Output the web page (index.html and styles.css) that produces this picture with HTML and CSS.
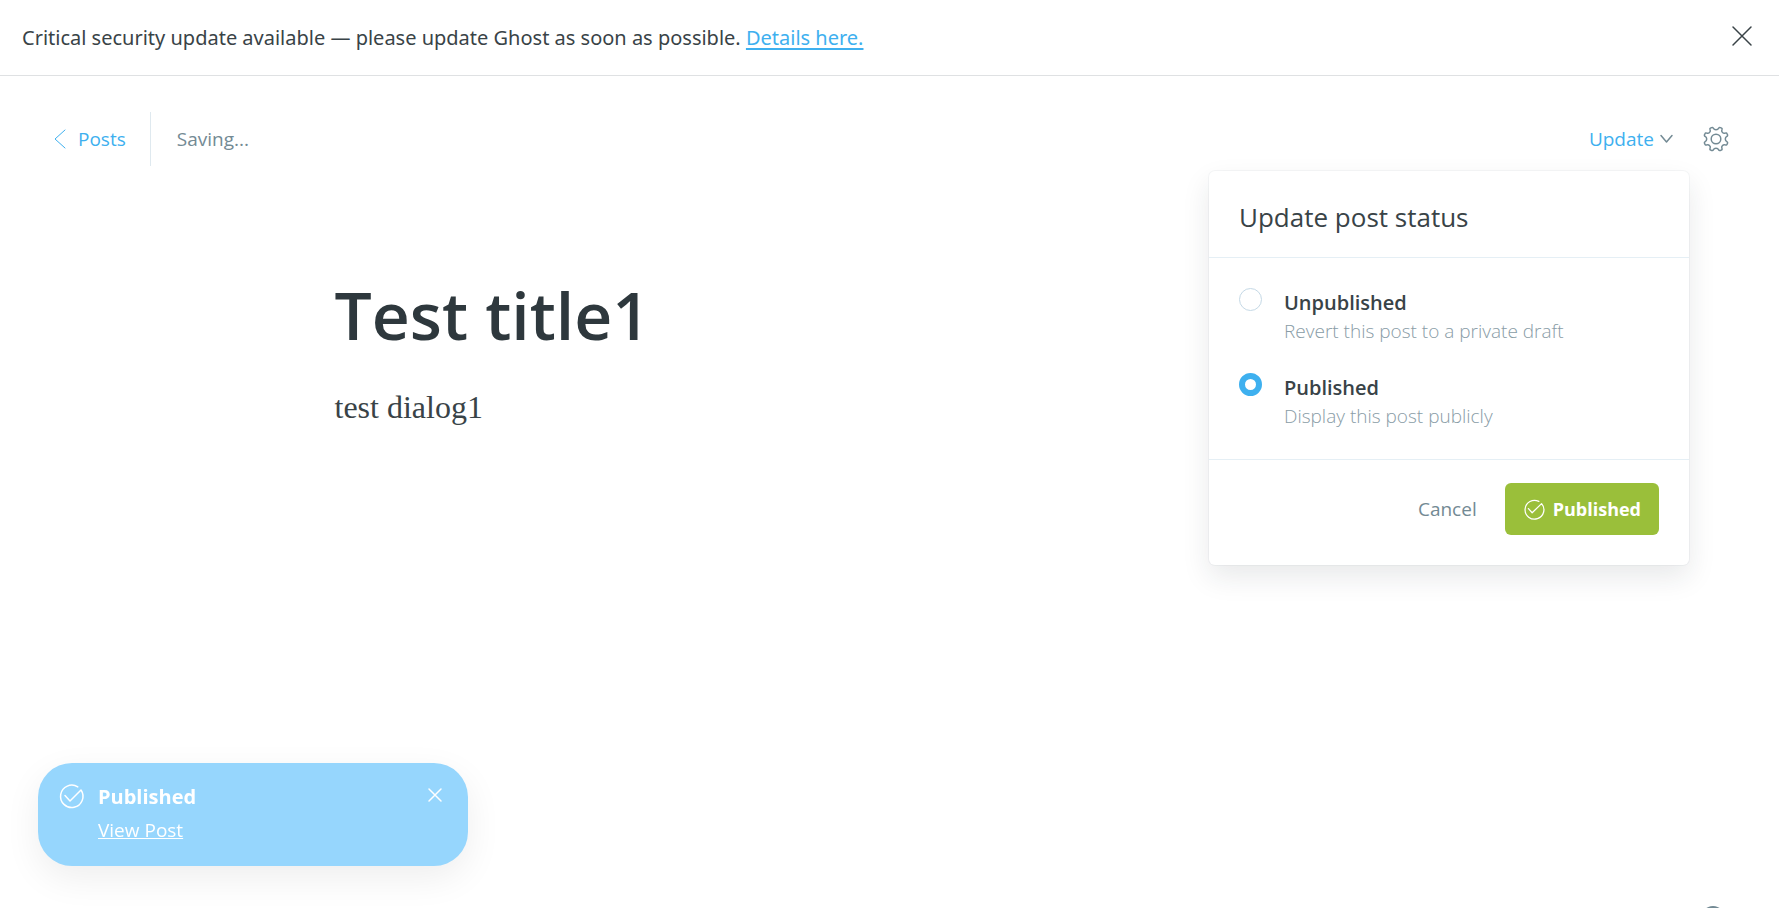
FILE: index.html
```html
<!DOCTYPE html>
<html lang="en">
<head>
<meta charset="utf-8">
<meta name="viewport" content="width=device-width, initial-scale=1">
<title>Test title1 - Editor</title>
<link rel="stylesheet" href="styles.css">
</head>
<body>
<div class="app">
  <aside class="alert">
    <p class="alert-text">Critical security update available — please update Ghost as soon as possible. <a href="#details">Details here.</a></p>
    <button class="icon-button alert-close" type="button" aria-label="Close alert">
      <svg width="20" height="20" viewBox="0 0 20 20"><path d="M1 1l18 18M19 1L1 19"/></svg>
    </button>
  </aside>

  <header class="toolbar">
    <a class="back" href="#posts">
      <svg width="12" height="20" viewBox="0 0 12 20"><path d="M11 1L1 10l10 9"/></svg>
      <span>Posts</span>
    </a>
    <span class="save-state">Saving...</span>
    <div class="toolbar-actions">
      <div class="publish">
        <button class="publish-trigger" type="button" aria-expanded="true">
          <span>Update</span>
          <svg width="13" height="8" viewBox="0 0 13 8"><path d="M1 .5l5.500 6.500L12 .5"/></svg>
        </button>
        <form class="popover" aria-label="Update post status">
          <h2 class="popover-title">Update post status</h2>
          <div class="popover-options">
            <label class="option">
              <input type="radio" name="status">
              <span class="option-text"><strong>Unpublished</strong><small>Revert this post to a private draft</small></span>
            </label>
            <label class="option">
              <input type="radio" name="status" checked>
              <span class="option-text"><strong>Published</strong><small>Display this post publicly</small></span>
            </label>
          </div>
          <footer class="popover-footer">
            <button class="cancel" type="button">Cancel</button>
            <button class="confirm" type="button">
              <svg width="20" height="20" viewBox="0 0 24 24"><path d="M6.500 11.500l4.500 5L22.300 5.500A11.300 11.300 0 1 1 19 2.900"/></svg>
              <span>Published</span>
            </button>
          </footer>
        </form>
      </div>
      <button class="icon-button settings" type="button" aria-label="Settings">
        <svg width="26" height="26" viewBox="-13 -13 26 26"><circle r="4.800"/><path d="M-5.200 -11.100Q-3.300 -12.200 -2.700 -10.900Q-1.900 -9.300 0 -9.300Q1.900 -9.300 2.700 -10.900Q3.300 -12.200 5.200 -11.100Q6.500 -10.600 5.900 -9.200Q5.200 -7.800 6.500 -6.500Q7.800 -5.200 9.200 -5.900Q10.600 -6.500 11.100 -5.200Q12.200 -3.300 10.900 -2.700Q9.300 -1.900 9.300 0Q9.300 1.900 10.900 2.700Q12.200 3.300 11.100 5.200Q10.600 6.500 9.200 5.900Q7.800 5.200 6.500 6.500Q5.200 7.800 5.900 9.200Q6.500 10.600 5.200 11.100Q3.300 12.200 2.700 10.900Q1.900 9.300 0 9.300Q-1.900 9.300 -2.700 10.900Q-3.300 12.200 -5.200 11.100Q-6.500 10.600 -5.900 9.200Q-5.200 7.800 -6.500 6.500Q-7.800 5.200 -9.200 5.900Q-10.600 6.500 -11.100 5.200Q-12.200 3.300 -10.900 2.700Q-9.300 1.900 -9.300 0Q-9.300 -1.900 -10.900 -2.700Q-12.200 -3.300 -11.100 -5.200Q-10.600 -6.500 -9.200 -5.900Q-7.800 -5.200 -6.500 -6.500Q-5.200 -7.800 -5.900 -9.200Q-6.500 -10.600 -5.200 -11.100Z"/></svg>
      </button>
    </div>
  </header>

  <main class="editor">
    <input class="post-title" type="text" value="Test title1" aria-label="Post title">
    <p class="post-body">test dialog1</p>
  </main>
</div>

<aside class="toast">
  <svg class="toast-icon" width="24" height="24" viewBox="0 0 24 24"><path d="M6 11.500l5 5.500L22 6A11.200 11.200 0 1 1 18.800 2.900"/></svg>
  <div class="toast-content">
    <strong>Published</strong>
    <a href="#view">View Post</a>
  </div>
  <button class="icon-button toast-close" type="button" aria-label="Dismiss">
    <svg width="14" height="14" viewBox="0 0 14 14"><path d="M1 1l12 12M13 1L1 13"/></svg>
  </button>
</aside>

<a class="help" href="#help" aria-label="Help"></a>
</body>
</html>
```
FILE: styles.css
```css
:root {
  --blue: #3eb0ef;
  --dark: #2e383d;
  --text: #394347;
  --mid: #738a94;
  --light: #899ca6;
  --line: #e5eff5;
  --green: #9abf3a;
}

* { box-sizing: border-box; }

body {
  margin: 0;
  background: #fff;
  color: var(--text);
  font: 19px/24px "Open Sans", "Noto Sans", sans-serif;
}

.app {
  min-height: 100vh;
}

button,
input {
  margin: 0;
  padding: 0;
  border: 0;
  background: none;
  color: inherit;
  font: inherit;
}

button { cursor: pointer; }
h2, p { margin: 0; }

svg {
  display: block;
  flex: none;
  overflow: visible;
  fill: none;
  stroke: currentColor;
  stroke-width: 1.5;
  stroke-linecap: round;
  stroke-linejoin: round;
}

.alert {
  display: flex;
  align-items: center;
  justify-content: space-between;
  gap: 24px;
  min-height: 76px;
  padding: 0 27px 0 22px;
  border-bottom: 1px solid #dfe1e3;
}

.alert-text {
  font-family: "Noto Sans", sans-serif;
  font-size: 20px;
}

.alert a {
  color: var(--blue);
  text-underline-offset: 3px;
  text-decoration-thickness: 2px;
}

.alert-close { padding-bottom: 3px; }

.toolbar {
  display: flex;
  align-items: center;
  min-height: 54px;
  margin: 36px 50px 0;
}

.back {
  display: flex;
  align-items: center;
  gap: 12px;
  min-height: 54px;
  padding: 0 24px 0 4px;
  border-right: 1px solid #dfe9ef;
  color: var(--blue);
  text-decoration: none;
}

.back svg { stroke-width: 1; }

.save-state {
  margin-left: 26px;
  color: var(--mid);
}

.toolbar-actions {
  display: flex;
  align-items: center;
  gap: 30px;
  margin-left: auto;
}

.publish { position: relative; }

.publish-trigger {
  display: flex;
  align-items: center;
  gap: 6px;
  color: var(--blue);
}

.publish-trigger svg { color: var(--mid); }

.settings { color: var(--mid); }

.popover {
  position: absolute;
  top: 44px;
  right: -16px;
  z-index: 2;
  width: 480px;
  border-radius: 6px;
  background: #fff;
  box-shadow: 0 0 0 1px rgba(99, 114, 130, .06), 0 12px 28px rgba(27, 39, 51, .1);
}

.popover-title {
  padding: 30px 30px 24px;
  border-bottom: 1px solid var(--line);
  font-size: 26px;
  font-weight: 400;
  line-height: 32px;
}

.popover-options {
  display: grid;
  gap: 27px;
  padding: 30px 30px 28px;
  border-bottom: 1px solid var(--line);
}

.option {
  display: flex;
  align-items: flex-start;
  gap: 22px;
}

.option input {
  flex: none;
  width: 23px;
  height: 23px;
  border: 1px solid #c5d9e6;
  border-radius: 50%;
  appearance: none;
}

.option input:checked { border: 6px solid var(--blue); }

.option-text {
  display: grid;
  line-height: 29px;
}

.option strong {
  font-size: 20px;
  font-weight: 600;
}

.option small {
  color: var(--light);
  font-size: 19px;
  font-weight: 300;
}

.popover-footer {
  display: flex;
  align-items: center;
  justify-content: flex-end;
  gap: 28px;
  padding: 23px 30px 30px;
}

.cancel { color: var(--mid); }

.confirm {
  display: flex;
  align-items: center;
  gap: 10px;
  min-height: 52px;
  padding: 0 18px;
  border-radius: 6px;
  background: var(--green);
  color: #fff;
  font-size: 18px;
  font-weight: 700;
}

.editor {
  max-width: 1110px;
  margin: 0 auto;
  padding-top: 102px;
}

.post-title {
  display: block;
  width: 100%;
  outline: 0;
  color: var(--dark);
  font-size: 66px;
  font-weight: 600;
  line-height: 92px;
}

.post-body {
  margin-top: 25px;
  font: 32px/44px "Liberation Serif", serif;
}

.toast {
  position: fixed;
  bottom: 42px;
  left: 38px;
  display: flex;
  align-items: flex-start;
  width: 430px;
  padding: 19px 26px 21px 21px;
  border-radius: 34px;
  background: #96d6fd;
  box-shadow: 0 12px 36px rgba(0, 0, 0, .07);
  color: #fff;
}

.toast-icon { margin-top: 2px; }

.toast-content {
  display: grid;
  flex: 1;
  justify-items: start;
  gap: 3px;
  margin-left: 15px;
  line-height: 30px;
}

.toast-content strong {
  font-size: 20px;
  font-weight: 700;
}

.toast-content a { color: #fff; }
.toast-close { margin-top: 6px; }

.help {
  position: fixed;
  right: 54px;
  bottom: -22px;
  width: 24px;
  height: 24px;
  border: 2px solid var(--mid);
  border-radius: 50%;
}
```
